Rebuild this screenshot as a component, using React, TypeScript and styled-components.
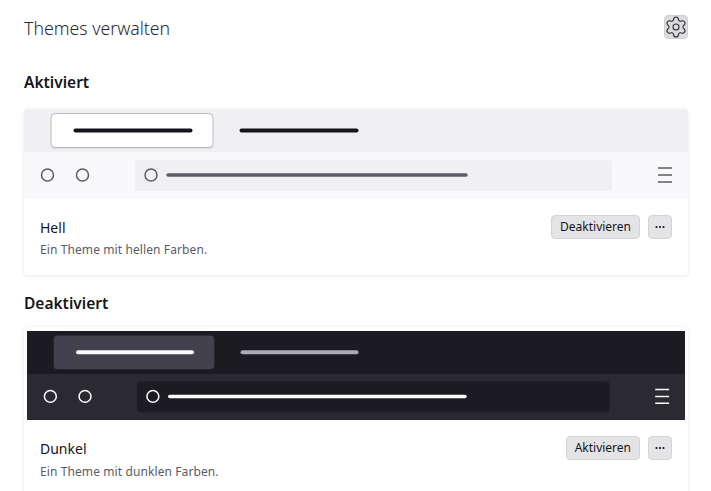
import styled, { createGlobalStyle } from "styled-components";
import { Settings } from "lucide-react";

const GlobalStyle = createGlobalStyle`
  html, body {
    margin: 0;
    height: 100%;
    overflow: hidden;
    background: #fff;
  }
  body {
    font-family: "Noto Sans", "Open Sans", sans-serif;
    color: #15141a;
  }
`;

const Page = styled.div`
  display: flex;
  flex-direction: column;
  padding: 15px 23px 0 24px;
`;

const Header = styled.header`
  display: flex;
  justify-content: space-between;
  align-items: center;
  height: 24px;
  margin-bottom: 31px;
`;

const Title = styled.h1`
  margin: 1px 0 0;
  font-size: 17.7px;
  font-weight: 300;
  color: #2b2a33;
`;

const GearButton = styled.button`
  display: flex;
  align-items: center;
  justify-content: center;
  width: 24px;
  height: 24px;
  padding: 0;
  border: 1px solid #d0d0d2;
  border-radius: 4px;
  background: #dcdcde;
  color: #2b2a33;
  overflow: visible;

  svg {
    flex: none;
  }
`;

const SectionTitle = styled.h2`
  margin: 0;
  height: 24px;
  font-size: 15.5px;
  line-height: 24px;
  font-weight: 600;
  color: #15141a;
`;

const Card = styled.section<{ $inset: boolean }>`
  display: flex;
  flex-direction: column;
  margin-top: ${(p) => (p.$inset ? "12px" : "15px")};
  margin-bottom: 16px;
  padding: ${(p) => (p.$inset ? "4px 3px 0" : "0")};
  border-radius: 4px;
  overflow: hidden;
  background: #fff;
  box-shadow: 0 1px 4px rgba(58, 57, 68, 0.12);
`;

const Preview = styled.svg`
  display: block;
  width: 100%;
  flex: none;

  rect.band {
    shape-rendering: crispEdges;
  }
`;

const Info = styled.div<{ $inset: boolean }>`
  display: flex;
  justify-content: space-between;
  align-items: flex-start;
  padding: ${(p) => (p.$inset ? "16px 13px 0" : "16px 16px 0")};
  height: 60px;
`;

const Name = styled.div`
  font-size: 14px;
  line-height: 26px;
  font-weight: 450;
  color: #15141a;
`;

const Description = styled.div<{ $inset: boolean }>`
  margin-top: ${(p) => (p.$inset ? "2px" : "1px")};
  font-size: 12px;
  line-height: 16px;
  letter-spacing: 0.1px;
  color: #5b5b66;
`;

const Actions = styled.div`
  display: flex;
  gap: 8px;
`;

const ActionButton = styled.button`
  height: 24px;
  padding: 0 8px;
  border: 1px solid #d4d4d6;
  border-radius: 4px;
  background: #e4e4e6;
  color: #15141a;
  font-family: inherit;
  font-size: 12px;
  line-height: 20px;
`;

const MoreButton = styled(ActionButton)`
  width: 24px;
  padding: 0;
  display: flex;
  align-items: center;
  justify-content: center;
`;

type Palette = {
  frame: string;
  toolbar: string;
  tab: string;
  tabStroke: string;
  tabShadow: string;
  tabLine: string;
  otherTab: string;
  field: string;
  fieldLine: string;
  icon: string;
};

const light: Palette = {
  frame: "#f0f0f4",
  toolbar: "#f9f9fb",
  tab: "#ffffff",
  tabStroke: "#b8b8bf",
  tabShadow: "#d0d0d6",
  tabLine: "#15141a",
  otherTab: "#15141a",
  field: "#f0f0f4",
  fieldLine: "#5b5b66",
  icon: "#5b5b66",
};

const dark: Palette = {
  frame: "#1c1b22",
  toolbar: "#2b2a33",
  tab: "#42414d",
  tabStroke: "none",
  tabShadow: "none",
  tabLine: "#fbfbfe",
  otherTab: "#ababb0",
  field: "#1c1b22",
  fieldLine: "#fbfbfe",
  icon: "#fbfbfe",
};

function ThemePreview({ palette }: { palette: Palette }) {
  return (
    <Preview viewBox="0 0 664 90">
      <rect className="band" width="664" height="44" fill={palette.frame} />
      <rect x="27" y="5.5" width="162" height="34" rx="4" fill={palette.tabShadow} />
      <rect x="27" y="4.5" width="162" height="34" rx="4" fill={palette.tab} stroke={palette.tabStroke} />
      <line x1="51.5" y1="21.5" x2="166.5" y2="21.5" stroke={palette.tabLine} strokeWidth="4" strokeLinecap="round" />
      <line x1="217.5" y1="21.5" x2="332.5" y2="21.5" stroke={palette.otherTab} strokeWidth="4" strokeLinecap="round" />
      <rect className="band" y="43" width="664" height="47" fill={palette.toolbar} />
      <circle cx="23.5" cy="66" r="6" fill="none" stroke={palette.icon} strokeWidth="1.5" />
      <circle cx="58.5" cy="66" r="6" fill="none" stroke={palette.icon} strokeWidth="1.5" />
      <rect x="111" y="51" width="477" height="31" rx="4" fill={palette.field} />
      <circle cx="127" cy="66" r="6" fill="none" stroke={palette.icon} strokeWidth="1.5" />
      <line x1="144" y1="66" x2="442" y2="66" stroke={palette.fieldLine} strokeWidth="3.5" strokeLinecap="round" />
      <path d="M634 59h14M634 66h14M634 73h14" stroke={palette.icon} strokeWidth="1.5" fill="none" />
    </Preview>
  );
}

function ThemeCard({ name, description, action, palette, inset }: { name: string; description: string; action: string; palette: Palette; inset: boolean }) {
  return (
    <Card $inset={inset}>
      <ThemePreview palette={palette} />
      <Info $inset={inset}>
        <div>
          <Name>{name}</Name>
          <Description $inset={inset}>{description}</Description>
        </div>
        <Actions>
          <ActionButton>{action}</ActionButton>
          <MoreButton>
            <svg width="10" height="4" viewBox="0 0 10 4" fill="#15141a">
              <circle cx="1.5" cy="2" r="1.1" />
              <circle cx="5" cy="2" r="1.1" />
              <circle cx="8.5" cy="2" r="1.1" />
            </svg>
          </MoreButton>
        </Actions>
      </Info>
    </Card>
  );
}

export default function App() {
  return (
    <Page>
      <GlobalStyle />
      <Header>
        <Title>Themes verwalten</Title>
        <GearButton>
          <Settings size={24} strokeWidth={1.1} />
        </GearButton>
      </Header>
      <SectionTitle>Aktiviert</SectionTitle>
      <ThemeCard name="Hell" description="Ein Theme mit hellen Farben." action="Deaktivieren" palette={light} inset={false} />
      <SectionTitle>Deaktiviert</SectionTitle>
      <ThemeCard name="Dunkel" description="Ein Theme mit dunklen Farben." action="Aktivieren" palette={dark} inset={true} />
    </Page>
  );
}
